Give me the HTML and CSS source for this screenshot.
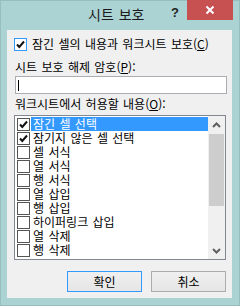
FILE: index.html
```html
<!DOCTYPE html>
<html lang="ko">
<head>
<meta charset="utf-8">
<title>시트 보호</title>
<link rel="stylesheet" href="styles.css">
</head>
<body>
<div class="window">
  <div class="titlebar">
    <span class="title">시트 보호</span>
    <span class="help">?</span>
    <div class="close">
      <svg width="10" height="10" viewBox="0 0 10 10"><path d="M1.5 1.5 L8.5 8.5 M8.5 1.5 L1.5 8.5" stroke="#fff" stroke-width="2" fill="none"/></svg>
    </div>
  </div>
  <div class="panel">
    <div class="row-check">
      <span class="box box-focus">
        <svg width="11" height="11" viewBox="0 0 11 11"><path d="M2 5.5 L4.3 8 L9 2.5" stroke="#111" stroke-width="2" fill="none"/></svg>
      </span>
      <span class="text">잠긴 셀의 내용과 워크시트 보호(<u>C</u>)</span>
    </div>
    <div class="label label-pw">시트 보호 해제 암호(<u>P</u>):</div>
    <div class="input"><span class="caret"></span></div>
    <div class="label label-list">워크시트에서 허용할 내용(<u>O</u>):</div>
    <div class="list">
      <div class="items">
        <div class="item selected"><span class="box"><svg width="11" height="11" viewBox="0 0 11 11"><path d="M2 5.5 L4.3 8 L9 2.5" stroke="#111" stroke-width="2" fill="none"/></svg></span><span class="itext">잠긴 셀 선택</span></div>
        <div class="item"><span class="box"><svg width="11" height="11" viewBox="0 0 11 11"><path d="M2 5.5 L4.3 8 L9 2.5" stroke="#111" stroke-width="2" fill="none"/></svg></span><span class="itext">잠기지 않은 셀 선택</span></div>
        <div class="item"><span class="box"></span><span class="itext">셀 서식</span></div>
        <div class="item"><span class="box"></span><span class="itext">열 서식</span></div>
        <div class="item"><span class="box"></span><span class="itext">행 서식</span></div>
        <div class="item"><span class="box"></span><span class="itext">열 삽입</span></div>
        <div class="item"><span class="box"></span><span class="itext">행 삽입</span></div>
        <div class="item"><span class="box"></span><span class="itext">하이퍼링크 삽입</span></div>
        <div class="item"><span class="box"></span><span class="itext">열 삭제</span></div>
        <div class="item"><span class="box"></span><span class="itext">행 삭제</span></div>
      </div>
      <div class="scrollbar">
        <div class="sb-btn"><svg width="9" height="6" viewBox="0 0 9 6"><path d="M1 5 L4.5 1.5 L8 5" stroke="#606060" stroke-width="2" fill="none"/></svg></div>
        <div class="sb-track"><div class="sb-thumb"></div></div>
        <div class="sb-btn"><svg width="9" height="6" viewBox="0 0 9 6"><path d="M1 1 L4.5 4.5 L8 1" stroke="#606060" stroke-width="2" fill="none"/></svg></div>
      </div>
    </div>
    <div class="buttons">
      <div class="btn btn-default">확인</div>
      <div class="btn">취소</div>
    </div>
  </div>
</div>
</body>
</html>
```
FILE: styles.css
```css
* { box-sizing: border-box; }
html, body { margin: 0; padding: 0; }
body {
  width: 240px;
  height: 306px;
  font-family: "Noto Sans CJK KR", "Noto Sans", sans-serif;
  font-size: 12px;
  color: #000;
  overflow: hidden;
}
.window {
  width: 240px;
  height: 306px;
  background: #abd3d3;
  border: 1px solid #98bfbf;
  display: flex;
  flex-direction: column;
}
.titlebar {
  height: 29px;
  display: flex;
  align-items: flex-start;
  padding-left: 87px;
  padding-right: 6px;
}
.title {
  margin-top: 5px;
  font-size: 14px;
  line-height: 16px;
  color: #1a1a1a;
  word-spacing: 1px;
}
.help {
  margin-left: auto;
  margin-top: 5px;
  font-family: "Liberation Sans", sans-serif;
  font-weight: bold;
  font-size: 13px;
  line-height: 14px;
  color: #222;
}
.close {
  margin-left: 8px;
  margin-top: -1px;
  width: 46px;
  height: 20px;
  background: #c75050;
  display: flex;
  align-items: center;
  justify-content: center;
}
.panel {
  margin-left: 6px;
  width: 225px;
  height: 268px;
  background: #f0f0f0;
  display: flex;
  flex-direction: column;
  padding: 7px 6px 0 7px;
}
.row-check {
  display: flex;
  align-items: center;
  height: 14px;
}
.box {
  width: 13px;
  height: 13px;
  border: 1px solid #555;
  background: #fff;
  display: flex;
  align-items: center;
  justify-content: center;
  flex: none;
}
.box-focus { border-color: #3399ff; }
.row-check .text {
  margin-left: 5px;
  line-height: 14px;
  white-space: nowrap;
  word-spacing: 1px;
}
.label {
  line-height: 14px;
  white-space: nowrap;
  margin-left: 1px;
  word-spacing: 1px;
}
.label-pw { margin-top: 9px; }
.input {
  margin-top: 2px;
  margin-left: 1px;
  width: 212px;
  height: 18px;
  border: 1px solid #abadb3;
  background: #fff;
  display: flex;
  align-items: center;
}
.caret {
  width: 1px;
  height: 11px;
  background: #000;
  margin-left: 2px;
}
.label-list { margin-top: 3px; }
.list {
  margin-top: 4px;
  width: 212px;
  height: 145px;
  border: 1px solid #828790;
  background: #fff;
  display: flex;
  overflow: hidden;
}
.items {
  flex: 1;
  padding-top: 1px;
  display: flex;
  flex-direction: column;
  min-width: 0;
}
.item {
  height: 14px;
  display: flex;
  align-items: center;
  padding-left: 2px;
  flex: none;
}
.itext {
  margin-left: 1px;
  padding-left: 2px;
  flex: 1;
  height: 14px;
  line-height: 14px;
  white-space: nowrap;
  word-spacing: 1px;
}
.selected .itext {
  background: #3399ff;
  color: #fff;
}
.scrollbar {
  width: 17px;
  flex: none;
  background: #f0f0f0;
  display: flex;
  flex-direction: column;
}
.sb-btn {
  height: 17px;
  display: flex;
  align-items: center;
  justify-content: center;
  flex: none;
}
.sb-track {
  flex: 1;
  padding: 1px 1px 0 1px;
}
.sb-thumb {
  height: 72px;
  background: #cdcdcd;
}
.buttons {
  margin-top: 11px;
  display: flex;
  justify-content: flex-end;
  gap: 9px;
}
.btn {
  width: 75px;
  height: 21px;
  border: 1px solid #acacac;
  background: linear-gradient(#f0f0f0, #e5e5e5);
  display: flex;
  align-items: center;
  justify-content: center;
  line-height: 14px;
}
.btn-default { border-color: #3399ff; }
```
